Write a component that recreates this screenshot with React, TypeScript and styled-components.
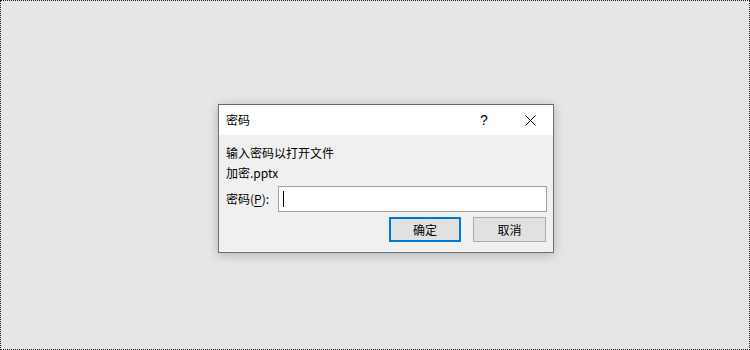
import React from "react";
import styled, { createGlobalStyle } from "styled-components";

const GlobalStyle = createGlobalStyle`
  html, body {
    margin: 0;
    padding: 0;
  }
  body {
    font-family: "Noto Sans CJK SC", "Microsoft YaHei", sans-serif;
    font-size: 12px;
    color: #000;
  }
`;

const App = () => {
  return (
    <>
      <GlobalStyle />
      <Stage>
        <Dialog>
          <TitleBar>
            <Title>密码</Title>
            <TitleButtons>
              <HelpMark>?</HelpMark>
              <CloseButton>
                <svg width="11" height="11" viewBox="0 0 11 11">
                  <path d="M0.5 0.5 L10.5 10.5 M10.5 0.5 L0.5 10.5" stroke="#000" strokeWidth="1" />
                </svg>
              </CloseButton>
            </TitleButtons>
          </TitleBar>
          <Body>
            <Line>输入密码以打开文件</Line>
            <Line>加密.pptx</Line>
            <InputRow>
              <Label>
                密码(<u>P</u>):
              </Label>
              <Field>
                <Caret />
              </Field>
            </InputRow>
            <ButtonRow>
              <Button $primary>确定</Button>
              <Button>取消</Button>
            </ButtonRow>
          </Body>
        </Dialog>
      </Stage>
    </>
  );
};

export default App;

const Stage = styled.div`
  width: 750px;
  height: 350px;
  box-sizing: border-box;
  border: 1px dotted #1a1a1a;
  background: #e6e6e6;
  padding: 103px 0 0 217px;
`;

const Dialog = styled.div`
  width: 336px;
  height: 149px;
  box-sizing: border-box;
  border: 1px solid #6f6f6f;
  background: #f0f0f0;
  box-shadow: 0 2px 10px rgba(0, 0, 0, 0.22);
  display: flex;
  flex-direction: column;
`;

const TitleBar = styled.div`
  height: 30px;
  background: #fff;
  display: flex;
  align-items: center;
  justify-content: space-between;
  padding: 0 0 0 7px;
`;

const Title = styled.span`
  font-size: 12px;
  line-height: 20px;
`;

const TitleButtons = styled.div`
  display: flex;
  align-items: center;
  height: 100%;
`;

const HelpMark = styled.span`
  width: 46px;
  text-align: center;
  font-family: "Liberation Sans", Arial, sans-serif;
  font-size: 14px;
`;

const CloseButton = styled.span`
  width: 46px;
  height: 100%;
  display: flex;
  align-items: center;
  justify-content: center;
`;

const Body = styled.div`
  flex: 1;
  display: flex;
  flex-direction: column;
  padding: 8px 6px 0 7px;
`;

const Line = styled.div`
  line-height: 20px;
  height: 20px;
`;

const InputRow = styled.div`
  display: flex;
  align-items: center;
  margin-top: 3px;
  gap: 9px;
`;

const Label = styled.span`
  line-height: 20px;
  white-space: nowrap;

  u {
    text-underline-offset: 2px;
  }
`;

const Field = styled.div`
  flex: 1;
  height: 26px;
  box-sizing: border-box;
  border: 1px solid #a0a0a0;
  background: #fff;
  display: flex;
  align-items: center;
  padding-left: 4px;
`;

const Caret = styled.span`
  width: 1px;
  height: 16px;
  background: #000;
`;

const ButtonRow = styled.div`
  display: flex;
  justify-content: flex-end;
  gap: 12px;
  margin-top: 5px;
  padding-right: 1px;
`;

const Button = styled.div<{ $primary?: boolean }>`
  width: ${(p) => (p.$primary ? "72px" : "73px")};
  height: 25px;
  box-sizing: border-box;
  border: ${(p) => (p.$primary ? "2px solid #0078d7" : "1px solid #adadad")};
  background: #e1e1e1;
  display: flex;
  align-items: center;
  justify-content: center;
  font-size: 12px;
`;
